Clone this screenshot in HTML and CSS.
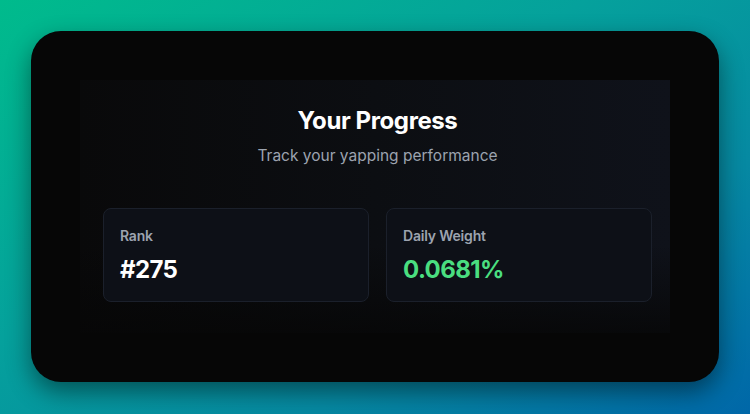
FILE: index.html
```html
<!DOCTYPE html>
<html>
<head>
<meta charset="utf-8">
<link rel="stylesheet" href="styles.css">
</head>
<body>
<div class="frame">
  <div class="panel">
    <h1 class="title">Your Progress</h1>
    <p class="subtitle">Track your yapping performance</p>
    <div class="stats">
      <div class="stat">
        <div class="label">Rank</div>
        <div class="value">#275</div>
      </div>
      <div class="stat">
        <div class="label">Daily Weight</div>
        <div class="value green">0.0681%</div>
      </div>
    </div>
  </div>
</div>
</body>
</html>
```
FILE: styles.css
```css
html, body {
  margin: 0;
  padding: 0;
}
body {
  width: 750px;
  height: 414px;
  overflow: hidden;
  background: linear-gradient(150deg, #00bb8c 0%, #05a19c 40%, #0689a2 70%, #0067a8 100%);
  font-family: Inter, "Noto Sans", sans-serif;
  padding: 31px;
  box-sizing: border-box;
}
.frame {
  width: 688px;
  height: 351px;
  box-sizing: border-box;
  background: #060606;
  border-radius: 30px;
  padding: 49px;
  box-shadow: 0 10px 24px rgba(0, 0, 0, 0.45);
}
.panel {
  height: 253px;
  box-sizing: border-box;
  padding: 25px 18px 32px 23px;
  background:
    linear-gradient(to bottom, rgba(6,6,6,0) 65%, rgba(6,6,6,0.8) 100%),
    linear-gradient(to right, #09090a 0%, #0c0e12 50%, #0f121a 100%);
  display: flex;
  flex-direction: column;
}
.title {
  margin: 0;
  text-align: center;
  color: #ffffff;
  font-size: 24px;
  line-height: 32px;
  font-weight: 700;
  letter-spacing: -0.4px;
}
.subtitle {
  margin: 7px 0 0;
  text-align: center;
  color: #9ca3af;
  font-size: 15.5px;
  line-height: 24px;
}
.stats {
  margin-top: 40px;
  display: grid;
  grid-template-columns: 1fr 1fr;
  gap: 17px;
}
.stat {
  height: 94px;
  box-sizing: border-box;
  border: 1px solid #1b202b;
  border-radius: 8px;
  background: #0d1017;
  padding: 17px 16px;
}
.label {
  color: #9ca3af;
  font-size: 14px;
  line-height: 20px;
  font-weight: 600;
  letter-spacing: -0.2px;
}
.value {
  margin-top: 8px;
  color: #ffffff;
  font-size: 24px;
  line-height: 32px;
  font-weight: 700;
  letter-spacing: -0.6px;
}
.value.green {
  color: #4ade80;
}
```
